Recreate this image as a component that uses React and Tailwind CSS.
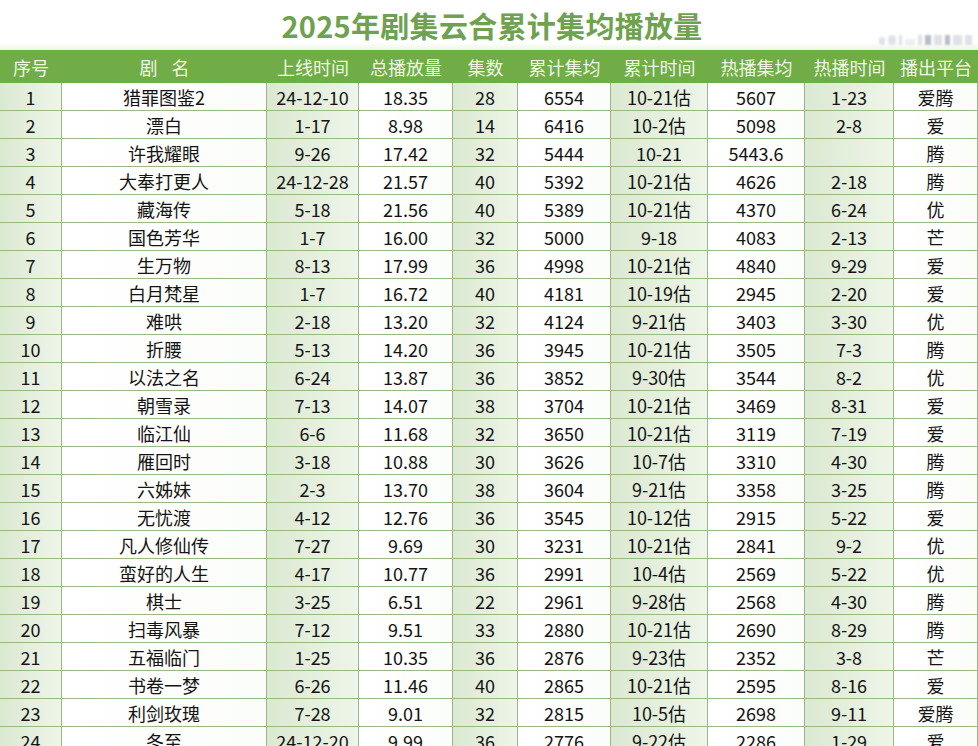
import React from 'react';

const COLS = [
  { w: 'w-[62px]', shade: true },
  { w: 'w-[205px]', shade: false },
  { w: 'w-[92px]', shade: true },
  { w: 'w-[94px]', shade: false },
  { w: 'w-[65px]', shade: true },
  { w: 'w-[93px]', shade: false },
  { w: 'w-[97px]', shade: true },
  { w: 'w-[97px]', shade: false },
  { w: 'w-[89px]', shade: true },
  { w: 'w-[84px]', shade: false },
];

const HEADERS = ['序号', 'NAME', '上线时间', '总播放量', '集数', '累计集均', '累计时间', '热播集均', '热播时间', '播出平台'];

const ROWS = [
  ['1', '猎罪图鉴2', '24-12-10', '18.35', '28', '6554', '10-21估', '5607', '1-23', '爱腾'],
  ['2', '漂白', '1-17', '8.98', '14', '6416', '10-2估', '5098', '2-8', '爱'],
  ['3', '许我耀眼', '9-26', '17.42', '32', '5444', '10-21', '5443.6', '', '腾'],
  ['4', '大奉打更人', '24-12-28', '21.57', '40', '5392', '10-21估', '4626', '2-18', '腾'],
  ['5', '藏海传', '5-18', '21.56', '40', '5389', '10-21估', '4370', '6-24', '优'],
  ['6', '国色芳华', '1-7', '16.00', '32', '5000', '9-18', '4083', '2-13', '芒'],
  ['7', '生万物', '8-13', '17.99', '36', '4998', '10-21估', '4840', '9-29', '爱'],
  ['8', '白月梵星', '1-7', '16.72', '40', '4181', '10-19估', '2945', '2-20', '爱'],
  ['9', '难哄', '2-18', '13.20', '32', '4124', '9-21估', '3403', '3-30', '优'],
  ['10', '折腰', '5-13', '14.20', '36', '3945', '10-21估', '3505', '7-3', '腾'],
  ['11', '以法之名', '6-24', '13.87', '36', '3852', '9-30估', '3544', '8-2', '优'],
  ['12', '朝雪录', '7-13', '14.07', '38', '3704', '10-21估', '3469', '8-31', '爱'],
  ['13', '临江仙', '6-6', '11.68', '32', '3650', '10-21估', '3119', '7-19', '爱'],
  ['14', '雁回时', '3-18', '10.88', '30', '3626', '10-7估', '3310', '4-30', '腾'],
  ['15', '六姊妹', '2-3', '13.70', '38', '3604', '9-21估', '3358', '3-25', '腾'],
  ['16', '无忧渡', '4-12', '12.76', '36', '3545', '10-12估', '2915', '5-22', '爱'],
  ['17', '凡人修仙传', '7-27', '9.69', '30', '3231', '10-21估', '2841', '9-2', '优'],
  ['18', '蛮好的人生', '4-17', '10.77', '36', '2991', '10-4估', '2569', '5-22', '优'],
  ['19', '棋士', '3-25', '6.51', '22', '2961', '9-28估', '2568', '4-30', '腾'],
  ['20', '扫毒风暴', '7-12', '9.51', '33', '2880', '10-21估', '2690', '8-29', '腾'],
  ['21', '五福临门', '1-25', '10.35', '36', '2876', '9-23估', '2352', '3-8', '芒'],
  ['22', '书卷一梦', '6-26', '11.46', '40', '2865', '10-21估', '2595', '8-16', '爱'],
  ['23', '利剑玫瑰', '7-28', '9.01', '32', '2815', '10-5估', '2698', '9-11', '爱腾'],
  ['24', '冬至', '24-12-20', '9.99', '36', '2776', '9-22估', '2286', '1-29', '爱'],
];

const FONT = { fontFamily: '"Noto Sans CJK SC", "Noto Sans", sans-serif' };

function Watermark() {
  // blurred watermark in the top right corner
  return (
    <div className="absolute right-[6px] top-[35px] flex items-end gap-[3px] blur-[1px] opacity-70">
      <div className="w-[6px] h-[8px] bg-gray-300 rounded-sm" />
      <div className="w-[8px] h-[10px] bg-gray-300 rounded-sm" />
      <div className="w-[3px] h-[10px] bg-gray-300" />
      <div className="w-[10px] h-[6px] bg-gray-200" />
      <div className="w-[4px] h-[10px] bg-gray-300" />
      <div className="w-[6px] h-[10px] bg-gray-400" />
      <div className="w-[8px] h-[10px] bg-gray-300" />
      <div className="w-[5px] h-[10px] bg-gray-400" />
      <div className="w-[9px] h-[10px] bg-gray-300" />
      <div className="w-[7px] h-[10px] bg-gray-300" />
    </div>
  );
}

export default function App() {
  return (
    <div className="relative w-[978px] h-[746px] overflow-hidden bg-white" style={FONT}>
      <div className="h-[50px] flex items-center justify-center bg-linear-to-b from-white from-85% to-[#eef6e6]">
        <h1 className="text-[29px] font-bold leading-none tracking-[0.3px] text-[#6ea24f] pt-[1px] pl-[6px]">
          2025年剧集云合累计集均播放量
        </h1>
      </div>
      <Watermark />

      <div className="flex h-[33px] bg-[#70ad47]">
        {HEADERS.map((h, i) => (
          <div
            key={i}
            className={`${COLS[i].w} shrink-0 flex items-center justify-center text-[18px] text-[#eef6e4] leading-none`}
          >
            {h === 'NAME' ? (
              <span>剧<span className="inline-block w-[14px]" />名</span>
            ) : (
              h
            )}
          </div>
        ))}
      </div>

      {ROWS.map((row, r) => (
        <div key={r} className="flex h-[28px]">
          {row.map((cell, i) => (
            <div
              key={i}
              className={`${COLS[i].w} shrink-0 flex items-center justify-center border-b border-r border-[#9bb78a] text-[18px] leading-none text-[#141414] ${
                COLS[i].shade
                  ? 'bg-linear-to-r from-[#dbe9d1] to-[#eef5e9]'
                  : 'bg-linear-to-r from-white to-[#fbfdf9]'
              }`}
            >
              {cell}
            </div>
          ))}
        </div>
      ))}
    </div>
  );
}
